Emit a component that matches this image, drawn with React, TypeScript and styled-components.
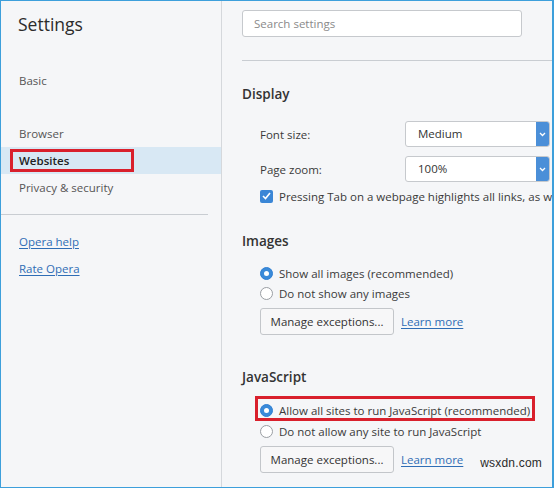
import React from "react";
import styled, { createGlobalStyle } from "styled-components";

const Global = createGlobalStyle`
  html, body { margin: 0; padding: 0; background: #ffffff; }
  * { box-sizing: border-box; }
`;

const font = `"Open Sans", "Noto Sans", "Liberation Sans", sans-serif`;

const Frame = styled.div`
  width: 554px;
  height: 488px;
  border: 1px solid #3d9fdb;
  border-right-width: 2px;
  background: #f5f6f8;
  display: flex;
  overflow: hidden;
  font-family: ${font};
  font-size: 11.5px;
  color: #3a3a3a;
  position: relative;
`;

const Sidebar = styled.aside`
  width: 221px;
  flex: none;
  border-right: 1px solid #d5d8dc;
  display: flex;
  flex-direction: column;
`;

const Title = styled.h1`
  margin: 11px 0 0 17px;
  font-size: 17.5px;
  line-height: 24px;
  font-weight: 400;
  color: #2b2b2b;
`;

const NavItem = styled.div<{ $active?: boolean; $gap?: number }>`
  position: relative;
  height: 27px;
  line-height: 27px;
  padding-left: 18px;
  margin-top: ${(p) => p.$gap ?? 0}px;
  color: ${(p) => (p.$active ? "#222" : "#555")};
  font-weight: ${(p) => (p.$active ? 600 : 400)};
  background: ${(p) => (p.$active ? "#d8e8f4" : "transparent")};
`;

const Divider = styled.hr<{ $width?: string; $top: number }>`
  border: 0;
  border-top: 1px solid #c9cdd2;
  margin: ${(p) => p.$top}px 0 0 0;
  width: ${(p) => p.$width ?? "auto"};
`;

const SideLink = styled.a<{ $gap?: number }>`
  display: block;
  height: 27px;
  line-height: 27px;
  margin: ${(p) => p.$gap ?? 0}px 0 0 18px;
  color: #2f6db5;
  text-decoration: underline;
  text-underline-offset: 2px;
  cursor: pointer;
`;

const Callout = styled.span<{ $l: number; $t: number; $w: number; $h: number }>`
  position: absolute;
  left: ${(p) => p.$l}px;
  top: ${(p) => p.$t}px;
  width: ${(p) => p.$w}px;
  height: ${(p) => p.$h}px;
  border: 3px solid #d9202c;
  pointer-events: none;
`;

const Main = styled.main`
  flex: 1;
  min-width: 0;
  padding-left: 20px;
  display: flex;
  flex-direction: column;
  white-space: nowrap;
`;

const Search = styled.div`
  margin-top: 9px;
  width: 280px;
  height: 27px;
  border: 1px solid #c6c9cd;
  border-radius: 3px;
  background: #fff;
  padding-left: 11px;
  line-height: 25px;
  color: #8a8a8a;
`;

const Heading = styled.h2<{ $gap: number }>`
  margin: ${(p) => p.$gap}px 0 0 0;
  font-size: 13.5px;
  line-height: 20px;
  font-weight: 600;
  color: #333;
`;

const Indent = styled.div<{ $gap?: number }>`
  margin: ${(p) => p.$gap ?? 0}px 0 0 18px;
  display: flex;
  flex-direction: column;
`;

const FieldRow = styled.div<{ $gap?: number }>`
  display: flex;
  align-items: center;
  height: 26px;
  margin-top: ${(p) => p.$gap ?? 0}px;
`;

const Label = styled.span`
  width: 145px;
  color: #3a3a3a;
`;

const Select = styled.div`
  width: 145px;
  height: 26px;
  display: flex;
  border: 1px solid #c6c9cd;
  border-radius: 3px;
  background: #fff;
  overflow: hidden;
`;

const SelectValue = styled.span`
  flex: 1;
  padding-left: 12px;
  line-height: 24px;
  color: #333;
`;

const SelectArrow = styled.span`
  width: 13px;
  background: #4b8fd8;
  display: flex;
  align-items: center;
  justify-content: center;
`;

const OptionRow = styled.label<{ $gap?: number }>`
  position: relative;
  display: flex;
  align-items: center;
  gap: 6px;
  height: 20px;
  margin-top: ${(p) => p.$gap ?? 0}px;
  color: #3a3a3a;
`;

const Radio = styled.span<{ $on?: boolean }>`
  width: 13px;
  height: 13px;
  flex: none;
  border-radius: 50%;
  border: 1px solid ${(p) => (p.$on ? "#2f7fd3" : "#9a9ea3")};
  background: ${(p) => (p.$on ? "#3a8ad9" : "#fff")};
  display: flex;
  align-items: center;
  justify-content: center;
  &::after {
    content: "";
    display: ${(p) => (p.$on ? "block" : "none")};
    width: 5px;
    height: 5px;
    border-radius: 50%;
    background: #fff;
  }
`;

const Check = styled.span`
  width: 13px;
  height: 13px;
  flex: none;
  border-radius: 2px;
  background: #3a86d6;
  display: flex;
  align-items: center;
  justify-content: center;
`;

const ButtonRow = styled.div<{ $gap: number }>`
  display: flex;
  align-items: center;
  gap: 7px;
  margin-top: ${(p) => p.$gap}px;
`;

const Button = styled.button`
  width: 134px;
  height: 27px;
  border: 1px solid #c3c6ca;
  border-radius: 3px;
  background: #f7f7f8;
  font-family: ${font};
  font-size: 11.5px;
  color: #333;
  padding: 0;
`;

const TextLink = styled.a`
  color: #2f6db5;
  text-decoration: underline;
  text-underline-offset: 2px;
  cursor: pointer;
`;

const Watermark = styled.span`
  position: absolute;
  right: 10px;
  bottom: 17px;
  font-family: "Liberation Sans", Arial, sans-serif;
  font-size: 12px;
  color: #2a2a2a;
  letter-spacing: 0.2px;
`;

const Chevron = () => (
  <svg width="7" height="5" viewBox="0 0 7 5" aria-hidden>
    <path d="M1 1 L3.5 3.5 L6 1" fill="none" stroke="#fff" strokeWidth="1.3" />
  </svg>
);

const Tick = () => (
  <svg width="9" height="8" viewBox="0 0 9 8" aria-hidden>
    <path d="M1 4 L3.5 6.5 L8 1" fill="none" stroke="#fff" strokeWidth="1.6" />
  </svg>
);

const Dropdown = ({ value }: { value: string }) => (
  <Select>
    <SelectValue>{value}</SelectValue>
    <SelectArrow>
      <Chevron />
    </SelectArrow>
  </Select>
);

export default function App() {
  return (
    <>
      <Global />
      <Frame>
        <Sidebar>
          <Title>Settings</Title>
          <NavItem $gap={31}>Basic</NavItem>
          <NavItem $gap={26}>Browser</NavItem>
          <NavItem $active>
            Websites
            <Callout $l={9} $t={2} $w={124} $h={23} />
          </NavItem>
          <NavItem>Privacy &amp; security</NavItem>
          <Divider $top={13} $width="207px" />
          <SideLink $gap={13}>Opera help</SideLink>
          <SideLink>Rate Opera</SideLink>
        </Sidebar>

        <Main>
          <Search>Search settings</Search>
          <Divider $top={23} />

          <Heading $gap={23}>Display</Heading>
          <Indent $gap={17}>
            <FieldRow>
              <Label>Font size:</Label>
              <Dropdown value="Medium" />
            </FieldRow>
            <FieldRow $gap={9}>
              <Label>Page zoom:</Label>
              <Dropdown value="100%" />
            </FieldRow>
            <OptionRow $gap={4}>
              <Check>
                <Tick />
              </Check>
              Pressing Tab on a webpage highlights all links, as well as form fields
            </OptionRow>
          </Indent>

          <Heading $gap={25}>Images</Heading>
          <Indent $gap={12}>
            <OptionRow>
              <Radio $on />
              Show all images (recommended)
            </OptionRow>
            <OptionRow>
              <Radio />
              Do not show any images
            </OptionRow>
            <ButtonRow $gap={5}>
              <Button>Manage exceptions...</Button>
              <TextLink>Learn more</TextLink>
            </ButtonRow>
          </Indent>

          <Heading $gap={32}>JavaScript</Heading>
          <Indent $gap={13}>
            <OptionRow>
              <Radio $on />
              Allow all sites to run JavaScript (recommended)
              <Callout $l={-5} $t={-4} $w={280} $h={25} />
            </OptionRow>
            <OptionRow $gap={1}>
              <Radio />
              Do not allow any site to run JavaScript
            </OptionRow>
            <ButtonRow $gap={5}>
              <Button>Manage exceptions...</Button>
              <TextLink>Learn more</TextLink>
            </ButtonRow>
          </Indent>
        </Main>
        <Watermark>wsxdn.com</Watermark>
      </Frame>
    </>
  );
}
